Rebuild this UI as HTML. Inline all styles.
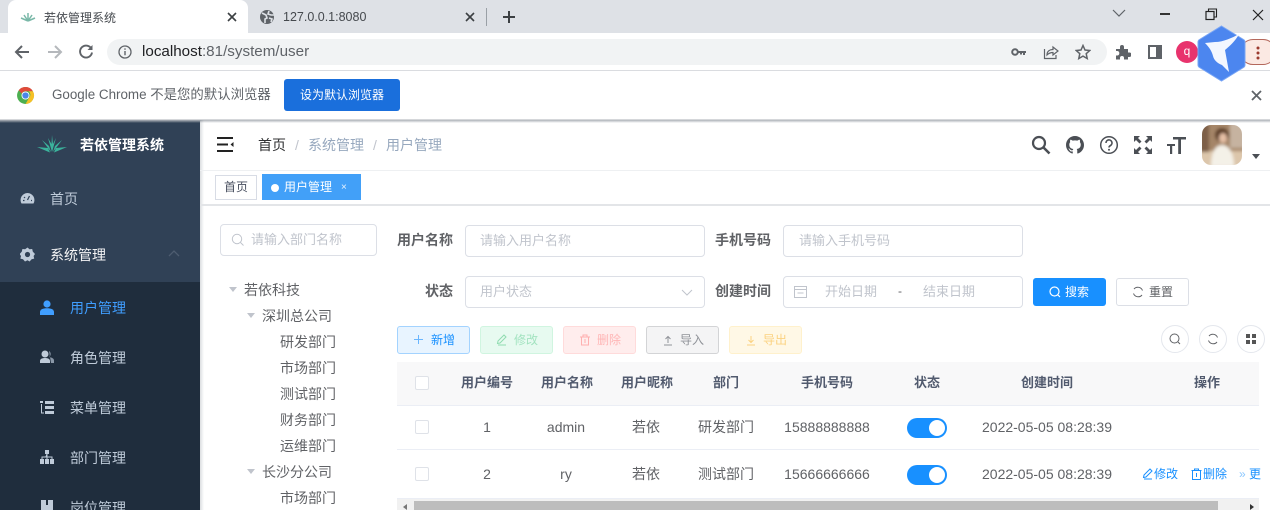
<!DOCTYPE html>
<html lang="zh"><head><meta charset="utf-8"><title>若依管理系统</title>
<style>
*{box-sizing:border-box;margin:0;padding:0}
html,body{width:1270px;height:510px;overflow:hidden;background:#fff}
body{position:relative;font-family:"Liberation Sans","Noto Sans CJK SC",sans-serif;font-size:14px;color:#606266}
.a,.t,.b,.c,svg.i{position:absolute}
.t{white-space:nowrap;line-height:20px;height:20px}
.c{white-space:nowrap;line-height:20px;height:20px;transform:translateX(-50%)}
.in{position:absolute;border:1px solid #dcdfe6;border-radius:4px;background:#fff;height:32px;width:240px}
.ph{color:#c0c4cc;font-size:13px}
.b{height:28px;width:73px;border-radius:3px;font-size:12px;line-height:26px;border:1px solid;top:326px;padding-left:33px}
.m{color:#bfcbd9;font-size:14px}
.lb{font-weight:bold;font-size:14px;color:#606266}
.th{font-weight:bold;font-size:13px;color:#515a6e}
.cb{position:absolute;width:14px;height:14px;border:1px solid #dfe2e8;border-radius:2px;background:#fff;left:415px}
.sw{position:absolute;left:907px;width:40px;height:20px;border-radius:10px;background:#1890ff}
.sw:after{content:"";position:absolute;right:2px;top:2px;width:16px;height:16px;border-radius:50%;background:#fff}
.cir{position:absolute;top:325px;width:28px;height:28px;border:1px solid #e4e7ed;border-radius:50%;background:#fff}
.tr{color:#606266;font-size:14px}
.car{position:absolute;width:0;height:0;border:4px solid transparent;border-top:5px solid #c0c4cc;border-bottom:0}
</style></head><body>

<!-- Chrome tab strip -->
<div class="a" style="left:0;top:0;width:1270px;height:33px;background:#dee1e6"></div>
<div class="a" style="left:8px;top:0;width:240px;height:34px;background:#fff;border-radius:8px 8px 0 0"></div>
<svg class="i" style="left:20px;top:11px" width="16" height="12" viewBox="0 0 16 12"><path d="M8 10V2M8 10L4 4M8 10l4-6M8 10L1 7M8 10l7-3" stroke="#7ab8a8" stroke-width="1.5" fill="none"/></svg>
<div class="t" style="left:44px;top:8px;font-size:12px;color:#45494e">若依管理系统</div>
<svg class="i" style="left:227px;top:12px" width="10" height="10"><path d="M1 1l8 8M9 1l-8 8" stroke="#3c4043" stroke-width="1.6"/></svg>
<svg class="i" style="left:259px;top:9px" width="16" height="16" viewBox="0 0 16 16"><circle cx="8" cy="8" r="7" fill="#5f6368"/><path d="M3 4l4 2 1 3-2 1 0 4M10 2l-1 3 3 1 3 0M10 9l3 1-1 3" stroke="#dee1e6" stroke-width="1.6" fill="none"/></svg>
<div class="t" style="left:283px;top:7px;font-size:12.5px;color:#45494e">127.0.0.1:8080</div>
<svg class="i" style="left:465px;top:12px" width="10" height="10"><path d="M1 1l8 8M9 1l-8 8" stroke="#3c4043" stroke-width="1.6"/></svg>
<div class="a" style="left:486px;top:8px;width:1px;height:18px;background:#9aa0a6"></div>
<svg class="i" style="left:502px;top:10px" width="14" height="14"><path d="M7 1v12M1 7h12" stroke="#3c4043" stroke-width="2"/></svg>
<svg class="i" style="left:1112px;top:9px" width="14" height="9"><path d="M1 1l6 6 6-6" stroke="#5f6368" stroke-width="1.2" fill="none"/></svg>
<div class="a" style="left:1160px;top:13px;width:10px;height:1.5px;background:#333"></div>
<svg class="i" style="left:1205px;top:8px" width="13" height="13"><path d="M3.5 3V1h8v8h-2" stroke="#222" fill="none" stroke-width="1.1"/><rect x="1" y="3.5" width="8" height="8" stroke="#222" fill="none" stroke-width="1.2"/></svg>
<svg class="i" style="left:1252px;top:9px" width="12" height="12"><path d="M1 1l10 10M11 1L1 11" stroke="#222" stroke-width="1.2"/></svg>

<!-- Toolbar -->
<div class="a" style="left:0;top:33px;width:1270px;height:38px;background:#fff;border-bottom:1px solid #dadce0"></div>
<svg class="i" style="left:13px;top:44px" width="18" height="16" viewBox="0 0 18 16"><path d="M16 8H3M9 2L3 8l6 6" stroke="#5f6368" stroke-width="2" fill="none"/></svg>
<svg class="i" style="left:46px;top:44px" width="18" height="16" viewBox="0 0 18 16"><path d="M2 8h13M9 2l6 6-6 6" stroke="#b5b8bc" stroke-width="2" fill="none"/></svg>
<svg class="i" style="left:78px;top:44px" width="16" height="16" viewBox="0 0 16 16"><path d="M13.500 5A6 6 0 1 0 14 8.500" stroke="#5f6368" stroke-width="1.900" fill="none"/><path d="M14.500 1v5h-5z" fill="#5f6368"/></svg>
<div class="a" style="left:107px;top:39px;width:1000px;height:26px;border-radius:13px;background:#f1f3f4"></div>
<svg class="i" style="left:118px;top:45px" width="14" height="14" viewBox="0 0 14 14"><circle cx="7" cy="7" r="6" stroke="#5f6368" stroke-width="1.300" fill="none"/><path d="M7 6v4.200M7 3.400v1.400" stroke="#5f6368" stroke-width="1.400"/></svg>
<div class="t" style="left:142px;top:42px;font-size:15.2px;color:#5f6368"><span style="color:#202124">localhost</span>:81/system/user</div>
<svg class="i" style="left:1011px;top:47px" width="16" height="10" viewBox="0 0 16 10"><circle cx="4" cy="5" r="2.800" stroke="#5f6368" stroke-width="2" fill="none"/><path d="M7 4h8v2h-1v2h-2V6h-1v1.500H9V6H7z" fill="#5f6368"/></svg>
<svg class="i" style="left:1043px;top:44px" width="16" height="16" viewBox="0 0 16 16"><path d="M1.500 5v9.500H13V11" stroke="#5f6368" stroke-width="1.200" fill="none"/><path d="M4 11C4 7 7 5.500 10 5.500V3l5 4-5 4V8.500C7.500 8.500 5.500 9.500 4 11z" stroke="#5f6368" stroke-width="1.200" fill="none"/></svg>
<svg class="i" style="left:1075px;top:44px" width="16" height="16" viewBox="0 0 16 16"><path d="M8 1.500l2 4.500 4.800.5-3.600 3.200 1 4.800L8 12.100 3.800 14.500l1-4.800L1.200 6.500 6 6z" stroke="#5f6368" stroke-width="1.500" fill="none"/></svg>
<svg class="i" style="left:1115px;top:44px" width="16" height="16" viewBox="0 0 16 16"><path d="M1 5h4V3a2 2 0 0 1 4 0v2h4v3.500h1.500a2.200 2.200 0 0 1 0 4.500H13v2.500H9V14a2 2 0 0 0-4 0v1.500H1v-4h1.500a2.300 2.300 0 0 0 0-4.500H1z" fill="#5f6368"/></svg>
<svg class="i" style="left:1148px;top:45px" width="14" height="14" viewBox="0 0 14 14"><rect x="1" y="1" width="12" height="12" stroke="#5f6368" stroke-width="2" fill="none"/><rect x="8" y="1" width="5" height="12" fill="#5f6368"/></svg>
<div class="a" style="left:1176px;top:41px;width:22px;height:22px;border-radius:50%;background:#e8336d;color:#fff;font-size:12px;line-height:20px;text-align:center">q</div>
<div class="a" style="left:1240px;top:39px;width:36px;height:26px;border-radius:13px;border:1px solid #b4685c;background:#fbe9e3"></div>
<svg class="i" style="left:1255px;top:46px" width="6" height="14"><circle cx="3" cy="2" r="1.500" fill="#9b3a2e"/><circle cx="3" cy="7" r="1.500" fill="#9b3a2e"/><circle cx="3" cy="12" r="1.500" fill="#9b3a2e"/></svg>

<!-- Infobar -->
<div class="a" style="left:0;top:71px;width:1270px;height:49px;background:#fff;border-bottom:1px solid #d5d7da"></div>
<svg class="i" style="left:16px;top:86px" width="19" height="19" viewBox="0 0 18 18"><circle cx="9" cy="9" r="8" fill="#4caf50"/><path d="M9 1a8 8 0 0 1 7 4H9a4 4 0 0 0-3.600 2.300L2.600 4A8 8 0 0 1 9 1z" fill="#e04a3a"/><path d="M16 5a8 8 0 0 1-7 12l3.500-6A4 4 0 0 0 12 5z" fill="#f6c026"/><circle cx="9" cy="9" r="3.800" fill="#fff"/><circle cx="9" cy="9" r="3" fill="#4a86e8"/></svg>
<div class="t" style="left:52px;top:85px;font-size:13.4px;color:#5f6368">Google Chrome 不是您的默认浏览器</div>
<div class="a" style="left:284px;top:79px;width:116px;height:32px;border-radius:3px;background:#1a6fdc;color:#fff;font-size:12px;line-height:32px;text-align:center">设为默认浏览器</div>
<svg class="i" style="left:1251px;top:90px" width="11" height="11"><path d="M1 1l9 9M10 1l-9 9" stroke="#5f6368" stroke-width="1.800"/></svg>
<svg class="i" style="left:1196px;top:25px" width="51" height="57" viewBox="0 0 51 57"><path d="M25.500 1L47.500 14.500a3 3 0 0 1 1.500 2.500v23a3 3 0 0 1-1.500 2.500L25.500 56 3.500 42.500A3 3 0 0 1 2 40V17a3 3 0 0 1 1.500-2.500z" fill="#4c86ef" stroke="#7aa6f5"/><path d="M9 18L19 17C27 17 36 13 43 9 40 15 35 20 29 25L33 47 26 40C21 38 18 35 17 31 16 27 14 23 9 18Z" fill="#f3f7ff"/></svg>

<!-- Sidebar -->
<div class="a" style="left:0;top:120px;width:200px;height:162px;background:#304156"></div>
<div class="a" style="left:0;top:282px;width:200px;height:228px;background:#1f2d3d"></div>
<div class="a" style="left:0;top:120px;width:1270px;height:3px;background:linear-gradient(#aeb2b8,rgba(200,200,200,0))"></div>
<svg class="i" style="left:36px;top:134px" width="32" height="20" viewBox="0 0 32 20"><path d="M16 18L12 4l3.500 6L16 1l1 9 3-6zM15 18L6 6l7 6zM17 18l9-12-7 6zM14 18.500L1 13l11 1zM18 18.500L31 13l-11 1z" fill="#3bb39c"/></svg>
<div class="t" style="left:80px;top:135px;font-size:14px;font-weight:bold;color:#fff">若依管理系统</div>
<svg class="i" style="left:20px;top:192px" width="15" height="13" viewBox="0 0 15 13"><path d="M7.500 1A7 7 0 0 0 1.500 11.500h12A7 7 0 0 0 7.500 1z" fill="#bfcbd9"/><path d="M7.500 8L9.500 4M4 5l1 1M3 8.500h1.500M11 8.500h1" stroke="#304156" stroke-width="1.200"/></svg>
<div class="t m" style="left:50px;top:189px">首页</div>
<svg class="i" style="left:20px;top:247px" width="15" height="15" viewBox="0 0 15 15"><path d="M7.500.5l2 1.800 2.700-.3.600 2.600 2.200 2.400-1.400 2 .6 2.600-2.600.6-2 2.300-2.100-1.300-2.500 1.300-2-2.300-2.600-.6.600-2.600-1.400-2 2.200-2.400.6-2.600 2.700.3z" fill="#bfcbd9"/><circle cx="7.500" cy="7.500" r="2.600" fill="#304156"/></svg>
<div class="t" style="left:50px;top:245px;font-size:14px;color:#f4f4f5">系统管理</div>
<svg class="i" style="left:168px;top:250px" width="12" height="7"><path d="M1 6l5-5 5 5" stroke="#4e5d70" stroke-width="1.300" fill="none"/></svg>
<svg class="i" style="left:40px;top:300px" width="14" height="15" viewBox="0 0 14 15"><circle cx="7" cy="4" r="3.600" fill="#409eff"/><path d="M0 15v-3c0-2.500 3-3.700 7-3.700s7 1.200 7 3.700v3z" fill="#409eff"/></svg>
<div class="t" style="left:70px;top:298px;font-size:14px;color:#409eff">用户管理</div>
<svg class="i" style="left:40px;top:350px" width="14" height="14" viewBox="0 0 14 14"><circle cx="5" cy="4" r="3.500" fill="#bfcbd9"/><path d="M0 13v-2c0-2 2-3 5-3s5 1 5 3v2z" fill="#bfcbd9"/><path d="M9 1a3.500 3.500 0 0 1 0 6c2.800.500 5 1.500 5 3.500v2.500h-3" fill="#8b98a8"/></svg>
<div class="t m" style="left:70px;top:348px">角色管理</div>
<svg class="i" style="left:40px;top:401px" width="14" height="13" viewBox="0 0 14 13"><path d="M0 0h3v2H0zM5 0h9v3H5zM5 5h9v3H5zM5 10h9v3H5zM1 3h1v8.500h2v1H1z" fill="#bfcbd9"/></svg>
<div class="t m" style="left:70px;top:398px">菜单管理</div>
<svg class="i" style="left:40px;top:450px" width="14" height="14" viewBox="0 0 14 14"><path d="M5 0h4v4H5zM0 9h4v5H0zM5 9h4v5H5zM10 9h4v5h-4zM6.500 4h1v2.500H12.500V9h-1V7.500h-4V9h-1V7.500h-4V9h-1V6.500h4z" fill="#bfcbd9"/></svg>
<div class="t m" style="left:70px;top:448px">部门管理</div>
<svg class="i" style="left:41px;top:500px" width="12" height="10" viewBox="0 0 12 10"><path d="M0 0h12v10H0z" fill="#bfcbd9"/><path d="M5 0h2v5H5z" fill="#1f2d3d"/></svg>
<div class="t m" style="left:70px;top:498px">岗位管理</div>
<div class="a" style="left:200px;top:120px;width:4px;height:390px;background:linear-gradient(90deg,rgba(0,21,41,.14),rgba(0,21,41,0))"></div>

<!-- Navbar -->
<svg class="i" style="left:217px;top:137px" width="17" height="15" viewBox="0 0 17 15"><path d="M0 1h16M0 7.500h11M0 14h16" stroke="#222" stroke-width="2"/><path d="M16.500 5L13.500 7.500l3 2.500z" fill="#222"/></svg>
<div class="t" style="left:258px;top:135px;font-size:14px;color:#303133">首页</div>
<div class="t" style="left:295px;top:135px;font-size:14px;color:#c0c4cc">/</div>
<div class="t" style="left:308px;top:135px;font-size:14px;color:#97a8be">系统管理</div>
<div class="t" style="left:373px;top:135px;font-size:14px;color:#c0c4cc">/</div>
<div class="t" style="left:386px;top:135px;font-size:14px;color:#97a8be">用户管理</div>
<svg class="i" style="left:1031px;top:135px" width="20" height="20" viewBox="0 0 20 20"><circle cx="8" cy="8" r="6" stroke="#4b4f55" stroke-width="2.200" fill="none"/><path d="M12.500 12.500L18.500 18.500" stroke="#4b4f55" stroke-width="2.600"/></svg>
<svg class="i" style="left:1066px;top:136px" width="18" height="18" viewBox="0 0 16 16"><path d="M8 0C3.580 0 0 3.580 0 8c0 3.540 2.290 6.530 5.470 7.590.4.070.55-.17.55-.38 0-.19-.01-.82-.01-1.490-2.010.37-2.530-.49-2.690-.94-.09-.23-.48-.94-.82-1.130-.28-.15-.68-.52-.01-.53.63-.01 1.080.58 1.230.82.72 1.210 1.870.87 2.330.66.070-.52.28-.87.51-1.070-1.780-.2-3.640-.89-3.640-3.950 0-.87.31-1.590.82-2.150-.08-.2-.36-1.020.08-2.120 0 0 .67-.21 2.200.82.64-.18 1.320-.27 2-.27.68 0 1.360.09 2 .27 1.530-1.040 2.200-.82 2.200-.82.44 1.100.16 1.920.08 2.120.51.56.82 1.270.82 2.150 0 3.070-1.870 3.750-3.650 3.950.29.25.54.73.54 1.480 0 1.070-.01 1.930-.01 2.200 0 .21.15.46.55.38A8.013 8.013 0 0 0 16 8c0-4.420-3.580-8-8-8z" fill="#4b4f55"/></svg>
<svg class="i" style="left:1099px;top:135px" width="20" height="20" viewBox="0 0 20 20"><circle cx="10" cy="10" r="8.300" stroke="#4b4f55" stroke-width="1.500" fill="none"/><path d="M7 8a3 3 0 1 1 4.500 2.500c-1 .600-1.500 1-1.500 2" stroke="#4b4f55" stroke-width="1.600" fill="none"/><circle cx="10" cy="14.800" r="1" fill="#4b4f55"/></svg>
<svg class="i" style="left:1133px;top:135px" width="20" height="20" viewBox="0 0 20 20"><path d="M1 1h6L5 3l3.500 3.500-2 2L3 5 1 7zM19 1h-6l2 2-3.500 3.500 2 2L17 5l2 2zM1 19h6l-2-2 3.500-3.500-2-2L3 15l-2-2zM19 19h-6l2-2-3.500-3.500 2-2L17 15l2-2z" fill="#4b4f55"/></svg>
<svg class="i" style="left:1167px;top:135px" width="19" height="20" viewBox="0 0 19 20"><path d="M6 2h13v2.500h-5V19h-2.800V4.500H6zM0 9h8v2H5.200v8H3v-8H0z" fill="#4b4f55"/></svg>
<svg class="i" style="left:1202px;top:125px" width="40" height="40" viewBox="0 0 40 40"><defs><clipPath id="ac"><rect width="40" height="40" rx="9"/></clipPath><filter id="bl"><feGaussianBlur stdDeviation="1.500"/></filter></defs><g clip-path="url(#ac)"><g filter="url(#bl)"><rect x="-3" y="-3" width="46" height="46" fill="#a58567"/><rect x="28" y="-3" width="15" height="26" fill="#c6b3a0"/><rect x="-3" y="26" width="46" height="17" fill="#dcc6ab"/><rect x="-3" y="-3" width="10" height="30" fill="#7d5f47"/><path d="M9 42c0-14 4-22 11-22s12 8 12 22z" fill="#f4f1e8"/><circle cx="20" cy="10" r="7" fill="#5b3c28"/><ellipse cx="21" cy="13" rx="4" ry="5" fill="#e6c0a6"/></g></g></svg>
<svg class="i" style="left:1252px;top:154px" width="8" height="5"><path d="M0 0h8L4 5z" fill="#4b4f55"/></svg>
<div class="a" style="left:200px;top:170px;width:1070px;height:1px;background:#eef0f2"></div>

<!-- Tags -->
<div class="a" style="left:215px;top:175px;width:42px;height:25px;border:1px solid #d8dce5;background:#fff;color:#495060;font-size:12px;line-height:23px;text-align:center">首页</div>
<div class="a" style="left:262px;top:174px;width:99px;height:26px;background:#42a0f8;color:#fff;font-size:12px;line-height:26px;padding-left:22px">用户管理</div>
<div class="a" style="left:271px;top:184px;width:8px;height:8px;border-radius:50%;background:#fff"></div>
<div class="t" style="left:341px;top:178px;font-size:10px;color:#e8f3fe">×</div>
<div class="a" style="left:200px;top:204px;width:1070px;height:2px;background:#e3e5e8"></div>

<!-- Tree -->
<div class="in" style="left:220px;top:224px;width:157px"></div>
<svg class="i" style="left:231px;top:233px" width="14" height="14" viewBox="0 0 14 14"><circle cx="6" cy="6" r="4.700" stroke="#c0c4cc" fill="none"/><path d="M9.500 9.500l3 3" stroke="#c0c4cc"/></svg>
<div class="t ph" style="left:251px;top:230px">请输入部门名称</div>
<div class="car" style="left:229px;top:287px"></div><div class="t tr" style="left:244px;top:280px">若依科技</div>
<div class="car" style="left:247px;top:313px"></div><div class="t tr" style="left:262px;top:306px">深圳总公司</div>
<div class="t tr" style="left:280px;top:332px">研发部门</div>
<div class="t tr" style="left:280px;top:358px">市场部门</div>
<div class="t tr" style="left:280px;top:384px">测试部门</div>
<div class="t tr" style="left:280px;top:410px">财务部门</div>
<div class="t tr" style="left:280px;top:436px">运维部门</div>
<div class="car" style="left:247px;top:469px"></div><div class="t tr" style="left:262px;top:462px">长沙分公司</div>
<div class="t tr" style="left:280px;top:488px">市场部门</div>

<!-- Form -->
<div class="t lb" style="left:397px;top:230px">用户名称</div>
<div class="in" style="left:465px;top:225px"></div>
<div class="t ph" style="left:480px;top:231px">请输入用户名称</div>
<div class="t lb" style="left:715px;top:230px">手机号码</div>
<div class="in" style="left:783px;top:225px"></div>
<div class="t ph" style="left:799px;top:231px">请输入手机号码</div>
<div class="t lb" style="left:425px;top:281px">状态</div>
<div class="in" style="left:465px;top:276px"></div>
<div class="t ph" style="left:480px;top:282px">用户状态</div>
<svg class="i" style="left:681px;top:289px" width="12" height="7"><path d="M1 1l5 5 5-5" stroke="#c0c4cc" fill="none"/></svg>
<div class="t lb" style="left:715px;top:281px">创建时间</div>
<div class="in" style="left:783px;top:276px"></div>
<svg class="i" style="left:794px;top:285px" width="13" height="13"><rect x=".5" y="1.500" width="12" height="11" stroke="#c0c4cc" fill="none"/><path d="M1 4.500h11M3.500 8h6" stroke="#c0c4cc"/></svg>
<div class="t ph" style="left:825px;top:282px">开始日期</div>
<div class="t" style="left:898px;top:281px;font-size:12px;color:#606266">-</div>
<div class="t ph" style="left:923px;top:282px">结束日期</div>
<div class="a" style="left:1033px;top:278px;width:73px;height:28px;border-radius:3px;background:#1890ff;color:#fff;font-size:12px;line-height:28px;padding-left:32px">搜索</div>
<svg class="i" style="left:1049px;top:286px" width="12" height="12"><circle cx="5.500" cy="5.500" r="4.500" stroke="#fff" stroke-width="1.200" fill="none"/><path d="M9 9l2 2" stroke="#fff" stroke-width="1.200"/></svg>
<div class="a" style="left:1116px;top:278px;width:73px;height:28px;border-radius:3px;border:1px solid #dcdfe6;background:#fff;color:#606266;font-size:12px;line-height:26px;padding-left:32px">重置</div>
<svg class="i" style="left:1132px;top:286px" width="12" height="12" viewBox="0 0 12 12"><path d="M10.500 4.500A5 5 0 0 0 2 3M1.500 7.500A5 5 0 0 0 10 9" stroke="#606266" fill="none"/></svg>

<!-- Action buttons -->
<div class="b" style="left:397px;background:#e8f4ff;border-color:#a3d3ff;color:#1890ff">新增</div>
<svg class="i" style="left:414px;top:335px" width="9" height="9"><path d="M4.500 0v9M0 4.500h9" stroke="#6ab6ff"/></svg>
<div class="b" style="left:480px;background:#e7faf0;border-color:#d0f5e0;color:#a3e3c0">修改</div>
<svg class="i" style="left:496px;top:334px" width="12" height="12" viewBox="0 0 12 12"><path d="M8 1l2 2-6 6-2.500.5L2 7zM2 11h8" stroke="#8fdcb0" fill="none"/></svg>
<div class="b" style="left:563px;background:#ffeded;border-color:#ffdbdb;color:#ffb6b6">删除</div>
<svg class="i" style="left:579px;top:334px" width="12" height="12" viewBox="0 0 12 12"><path d="M1 3h10M4 3V1h4v2M2.500 3v8h7V3M6 5v4" stroke="#ffb0b0" fill="none"/></svg>
<div class="b" style="left:646px;background:#f4f4f5;border-color:#d3d4d6;color:#909399">导入</div>
<svg class="i" style="left:662px;top:334px" width="12" height="12" viewBox="0 0 12 12"><path d="M2 11h8M6 9V3M3.500 5L6 2.500 8.500 5" stroke="#909399" fill="none"/></svg>
<div class="b" style="left:729px;background:#fff8e6;border-color:#fff1cc;color:#fbd281">导出</div>
<svg class="i" style="left:745px;top:334px" width="12" height="12" viewBox="0 0 12 12"><path d="M2 11h8M6 2v6M3.500 6L6 8.500 8.500 6" stroke="#fbd281" fill="none"/></svg>
<div class="cir" style="left:1161px"></div>
<div class="cir" style="left:1199px"></div>
<div class="cir" style="left:1237px"></div>
<svg class="i" style="left:1169px;top:333px" width="12" height="12"><circle cx="5.500" cy="5.500" r="4.500" stroke="#606266" fill="none"/><path d="M9 9l2 2" stroke="#606266"/></svg>
<svg class="i" style="left:1207px;top:333px" width="12" height="12" viewBox="0 0 12 12"><path d="M10.500 4.500A5 5 0 0 0 2 3M1.500 7.500A5 5 0 0 0 10 9" stroke="#606266" fill="none"/></svg>
<svg class="i" style="left:1246px;top:334px" width="10" height="10"><path d="M0 0h4v4H0zM6 0h4v4H6zM0 6h4v4H0zM6 6h4v4H6z" fill="#555"/></svg>

<!-- Table -->
<div class="a" style="left:397px;top:362px;width:862px;height:44px;background:#f8f8f9;border-bottom:1px solid #ebeef5"></div>
<div class="cb" style="top:376px"></div>
<div class="c th" style="left:487px;top:373px">用户编号</div>
<div class="c th" style="left:567px;top:373px">用户名称</div>
<div class="c th" style="left:647px;top:373px">用户昵称</div>
<div class="c th" style="left:726px;top:373px">部门</div>
<div class="c th" style="left:827px;top:373px">手机号码</div>
<div class="c th" style="left:927px;top:373px">状态</div>
<div class="c th" style="left:1047px;top:373px">创建时间</div>
<div class="c th" style="left:1207px;top:373px">操作</div>

<div class="cb" style="top:420px"></div>
<div class="c" style="left:487px;top:417px">1</div>
<div class="c" style="left:566px;top:417px">admin</div>
<div class="c" style="left:646px;top:417px">若依</div>
<div class="c" style="left:726px;top:417px">研发部门</div>
<div class="c" style="left:827px;top:417px">15888888888</div>
<div class="sw" style="top:418px"></div>
<div class="c" style="left:1047px;top:417px">2022-05-05 08:28:39</div>
<div class="a" style="left:397px;top:449px;width:862px;height:1px;background:#ebeef5"></div>

<div class="cb" style="top:467px"></div>
<div class="c" style="left:487px;top:464px">2</div>
<div class="c" style="left:566px;top:464px">ry</div>
<div class="c" style="left:646px;top:464px">若依</div>
<div class="c" style="left:726px;top:464px">测试部门</div>
<div class="c" style="left:827px;top:464px">15666666666</div>
<div class="sw" style="top:465px"></div>
<div class="c" style="left:1047px;top:464px">2022-05-05 08:28:39</div>
<svg class="i" style="left:1142px;top:468px" width="12" height="12" viewBox="0 0 12 12"><path d="M8 1l2 2-6 6-2.500.5L2 7zM2 11h8" stroke="#1890ff" fill="none"/></svg>
<div class="t" style="left:1154px;top:464px;font-size:12px;color:#1890ff">修改</div>
<svg class="i" style="left:1191px;top:468px" width="11" height="12" viewBox="0 0 11 12"><path d="M.5 2.500h10M3.500 2.500V1h4v1.500M1.500 2.500v9h8v-9M5.500 5v4" stroke="#1890ff" fill="none"/></svg>
<div class="t" style="left:1203px;top:464px;font-size:12px;color:#1890ff">删除</div>
<div class="a" style="left:1239px;top:464px;width:22px;height:20px;overflow:hidden;white-space:nowrap;font-size:12px;line-height:20px;color:#1890ff"><span style="color:#8cc8ff">»</span> 更多</div>

<!-- Scrollbar -->
<div class="a" style="left:397px;top:498px;width:862px;height:12px;background:#f1f1f1;border-top:1px solid #ebeef5"></div>
<div class="a" style="left:414px;top:501px;width:804px;height:9px;background:#bdbdbd"></div>
<svg class="i" style="left:403px;top:504px" width="4" height="6"><path d="M4 0v6L0 3z" fill="#777"/></svg>
<svg class="i" style="left:1250px;top:504px" width="4" height="6"><path d="M0 0v6l4-3z" fill="#333"/></svg>
</body></html>
